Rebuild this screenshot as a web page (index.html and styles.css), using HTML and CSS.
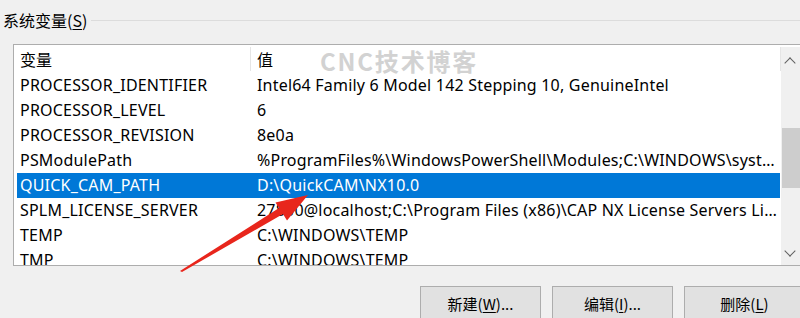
FILE: index.html
```html
<!DOCTYPE html>
<html lang="zh-CN">
<head>
  <meta charset="UTF-8">
  <title>系统变量</title>
  <link rel="stylesheet" href="styles.css">
</head>
<body>
  <div class="group-title">
    <span class="caption">系统变量(<u>S</u>)</span>
    <span class="rule"></span>
  </div>

  <div class="list">
    <div class="table">
      <div class="header">
        <div class="h-name">变量</div>
        <div class="h-value">值</div>
      </div>
      <div class="row"><span class="name">PROCESSOR_IDENTIFIER</span><span class="value">Intel64 Family 6 Model 142 Stepping 10, GenuineIntel</span></div>
      <div class="row"><span class="name">PROCESSOR_LEVEL</span><span class="value">6</span></div>
      <div class="row"><span class="name">PROCESSOR_REVISION</span><span class="value">8e0a</span></div>
      <div class="row"><span class="name">PSModulePath</span><span class="value">%ProgramFiles%\WindowsPowerShell\Modules;C:\WINDOWS\system32\WindowsPowerShell\v1.0\Modules</span></div>
      <div class="row selected"><span class="name">QUICK_CAM_PATH</span><span class="value">D:\QuickCAM\NX10.0</span></div>
      <div class="row"><span class="name">SPLM_LICENSE_SERVER</span><span class="value">27800@localhost;C:\Program Files (x86)\CAP NX License Servers Licenses</span></div>
      <div class="row"><span class="name">TEMP</span><span class="value">C:\WINDOWS\TEMP</span></div>
      <div class="row"><span class="name">TMP</span><span class="value">C:\WINDOWS\TEMP</span></div>
    </div>
    <div class="scrollbar">
      <div class="arrow up"></div>
      <div class="thumb"></div>
      <div class="arrow down"></div>
    </div>
  </div>

  <div class="buttons">
    <button>新建(<u>W</u>)...</button>
    <button>编辑(<u>I</u>)...</button>
    <button>删除(<u>L</u>)</button>
  </div>

  <div class="watermark">CNC技术博客</div>

  <svg class="pointer" width="800" height="318" viewBox="0 0 800 318">
    <polygon fill="#e8261c" points="180,271 279,208 275.5,202.5 308,195 287,220.5 283,214 182,272"/>
  </svg>
</body>
</html>
```

FILE: styles.css
```css
* { box-sizing: border-box; }
html, body {
  margin: 0;
  width: 800px;
  height: 318px;
  overflow: hidden;
}
body {
  position: relative;
  background: #f0f0f0;
  color: #000;
  font-family: "Noto Sans", "Noto Sans CJK SC", sans-serif;
  font-size: 16px;
}
u { text-decoration-thickness: 1px; text-underline-offset: 2px; }

.group-title {
  display: flex;
  align-items: center;
  height: 20px;
  margin-top: 10px;
  padding-left: 3px;
}
.caption {
  font-family: "Noto Sans CJK SC", sans-serif;
  font-size: 16px;
  line-height: 20px;
}
.rule {
  flex: 1;
  height: 1px;
  margin-left: 4px;
  background: #dcdcdc;
}

.list {
  display: flex;
  width: 788px;
  height: 222px;
  margin: 14px 0 0 13px;
  border: 1px solid #adadad;
  background: #fff;
}
.table {
  width: 768px;
  overflow: hidden;
}
.header {
  display: flex;
  height: 28px;
}
.h-name {
  width: 237px;
  padding-left: 6px;
  border-right: 1px solid #e5e5e5;
  margin: 2px 0;
  line-height: 24px;
}
.h-value {
  flex: 1;
  padding-left: 6px;
  border-right: 1px solid #e5e5e5;
  margin: 2px 0;
  line-height: 24px;
}
.h-name, .h-value {
  font-family: "Noto Sans CJK SC", sans-serif;
  font-size: 16px;
}
.row {
  display: flex;
  height: 25px;
  line-height: 25px;
  margin: 0 1px 0 3px;
  white-space: nowrap;
  letter-spacing: 0.2px;
}
.row.selected {
  background: #0078d7;
  color: #fff;
}
.name {
  width: 234px;
  padding-left: 3px;
  flex-shrink: 0;
}
.value {
  flex: 1;
  padding-left: 6px;
  padding-right: 2px;
  overflow: hidden;
  text-overflow: ellipsis;
}

.scrollbar {
  position: relative;
  width: 19px;
  margin-top: 2px;
  background: #f0f0f0;
}
.arrow {
  position: absolute;
  left: 5px;
  width: 8px;
  height: 8px;
  border-left: 1.5px solid #606060;
  border-top: 1.5px solid #606060;
}
.arrow.up { top: 12px; transform: rotate(45deg); }
.arrow.down { bottom: 10px; transform: rotate(225deg); }
.thumb {
  position: absolute;
  top: 81px;
  left: 1px;
  width: 18px;
  height: 60px;
  background: #cdcdcd;
}

.buttons {
  display: flex;
  gap: 11px;
  margin: 20px 0 0 420px;
}
.buttons button {
  flex-shrink: 0;
  width: 121px;
  height: 34px;
  padding: 0;
  border: 1px solid #adadad;
  background: #e1e1e1;
  color: #000;
  font-family: "Noto Sans CJK SC", sans-serif;
  font-size: 15px;
}

.watermark {
  position: absolute;
  left: 320px;
  top: 43px;
  color: #d2d2d2;
  font-family: "Noto Sans CJK SC", sans-serif;
  font-weight: 700;
  font-size: 24px;
  letter-spacing: 1.8px;
}
.pointer {
  position: absolute;
  left: 0;
  top: 0;
  pointer-events: none;
}
```
